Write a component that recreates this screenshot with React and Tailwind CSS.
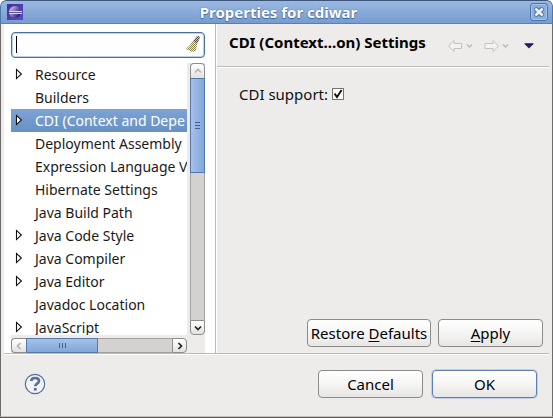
import React from "react";

const treeItems = [
  { name: "Resource", expandable: true },
  { name: "Builders" },
  { name: "CDI (Context and Depe", expandable: true, selected: true },
  { name: "Deployment Assembly" },
  { name: "Expression Language V" },
  { name: "Hibernate Settings" },
  { name: "Java Build Path" },
  { name: "Java Code Style", expandable: true },
  { name: "Java Compiler", expandable: true },
  { name: "Java Editor", expandable: true },
  { name: "Javadoc Location" },
  { name: "JavaScript", expandable: true },
];

function EclipseLogo() {
  return (
    <svg width="16" height="16" viewBox="0 0 16 16" aria-hidden="true">
      <defs>
        <linearGradient id="logoBg" x1="0" y1="0" x2="1" y2="1">
          <stop offset="0" stopColor="#3f31a0" />
          <stop offset="1" stopColor="#5f4bc4" />
        </linearGradient>
        <linearGradient id="logoBall" x1="0" y1="0" x2="1" y2="0.6">
          <stop offset="0" stopColor="#f1c5dd" />
          <stop offset="0.45" stopColor="#8d82c0" />
          <stop offset="1" stopColor="#26206e" />
        </linearGradient>
      </defs>
      <rect width="16" height="16" fill="url(#logoBg)" />
      <circle cx="8" cy="8" r="6" fill="url(#logoBall)" />
      <path d="M2 7.5h13M2 9.5h13" stroke="#d6dcf5" strokeWidth="1" />
      <path d="M2 8.5h13" stroke="#5a55a8" strokeWidth="1" />
    </svg>
  );
}

function CloseIcon() {
  return (
    <svg width="10" height="10" viewBox="0 0 10 10" aria-hidden="true">
      <path d="M1 1l8 8M9 1l-8 8" stroke="#44668f" strokeWidth="4.6" />
      <path d="M1.4 1.4l7.2 7.2M8.6 1.4l-7.2 7.2" stroke="#e9effa" strokeWidth="2.8" />
    </svg>
  );
}

function BroomIcon() {
  return (
    <svg width="16" height="18" viewBox="0 0 16 18" aria-hidden="true">
      <defs>
        <pattern id="bristle" width="2" height="2" patternUnits="userSpaceOnUse">
          <rect width="2" height="2" fill="#eeebd4" />
          <rect width="1" height="1" fill="#8c8444" />
          <rect x="1" y="1" width="1" height="1" fill="#8c8444" />
        </pattern>
        <pattern id="handle" width="2" height="2" patternUnits="userSpaceOnUse">
          <rect width="2" height="2" fill="#c8bfb6" />
          <rect width="1" height="1" fill="#574a48" />
          <rect x="1" y="1" width="1" height="1" fill="#574a48" />
        </pattern>
      </defs>
      <path d="M8 6l4 3-1 7-4 1-6-3 4-4z" fill="url(#bristle)" />
      <path d="M8 6l4-5h2l1 2-3 6z" fill="url(#handle)" />
    </svg>
  );
}

function Expander() {
  return (
    <svg width="8" height="12" viewBox="0 0 8 12" aria-hidden="true">
      <path d="M1.5 1.4v9.2L6.4 6z" fill="#fff" stroke="#111" strokeWidth="1.1" />
    </svg>
  );
}

function Chevron({ d, color }) {
  return (
    <svg width="8" height="8" viewBox="0 0 8 8" fill="none" aria-hidden="true">
      <path d={d} stroke={color} strokeWidth="1.7" />
    </svg>
  );
}

function NavArrow({ d }) {
  return (
    <svg width="26" height="14" viewBox="0 0 26 14" fill="none" aria-hidden="true">
      <path d={d} fill="#f3f2f1" stroke="#c3c2c0" />
      <path d="M19 5.5l2.5 2.5L24 5.5" stroke="#b9b8b6" strokeWidth="1.3" />
    </svg>
  );
}

const bevel = "flex items-center justify-center bg-linear-to-b from-white to-[#e3e2e1] border border-[#8f8d8a]";

const pushButton =
  "h-7 rounded-[4px] border bg-linear-to-b from-white via-[#f5f5f4] to-[#e7e6e5] text-[15px] leading-5 text-black whitespace-nowrap";

function TreeItem({ item }) {
  return (
    <li
      role="treeitem"
      aria-selected={!!item.selected}
      className={
        "flex h-[23px] shrink-0 items-center whitespace-nowrap " +
        (item.selected ? "bg-linear-to-b from-[#7ea3d4] to-[#6790c4] text-white" : "text-[#1a1a1a]")
      }
    >
      <span className="flex w-6 shrink-0 pb-0.5 pl-1">{item.expandable && <Expander />}</span>
      {item.name}
    </li>
  );
}

function Sidebar() {
  return (
    <aside className="flex w-[212px] shrink-0 flex-col border-r border-[#bcbab8] bg-white pt-2 pl-[7px]">
      <div className="relative mr-2.5 h-[26px]">
        <input
          type="text"
          aria-label="Filter"
          className="h-full w-full rounded-[4px] border border-[#4a6f9f] bg-white pr-6 pl-2 text-[15px] shadow-[inset_0_0_0_1px_#bfd2ec] outline-none"
        />
        <span className="absolute top-1 left-[5px] h-[17px] w-px bg-black" />
        <button type="button" aria-label="Clear" className="absolute top-[3px] right-1">
          <BroomIcon />
        </button>
      </div>
      <div className="mt-[5px] mr-2.5 flex min-h-0 flex-1">
        <div className="flex min-w-0 flex-1 flex-col">
          <ul role="tree" className="flex min-h-0 flex-1 flex-col overflow-hidden text-[14px] leading-[23px]">
            {treeItems.map((item) => (
              <TreeItem key={item.name} item={item} />
            ))}
          </ul>
          <div className="flex h-[18px] shrink-0 bg-[#edeceb] pt-[3px]">
            <button type="button" aria-label="Scroll left" className={bevel + " w-[15px] rounded-l-[4px] border-r-0"}>
              <Chevron d="M5.5 1L2.5 4l3 3" color="#b5b3b1" />
            </button>
            <div className="flex min-w-0 flex-1 border-y border-[#a3a19f] bg-[#d4d2d0]">
              <div className="-my-px flex w-[72px] items-center justify-center gap-[2px] border border-[#5377a8] bg-linear-to-b from-[#a5c2e9] to-[#82a7da]">
                <i className="h-[5px] w-px bg-[#3f618f]" />
                <i className="h-[5px] w-px bg-[#3f618f]" />
                <i className="h-[5px] w-px bg-[#3f618f]" />
              </div>
            </div>
            <button type="button" aria-label="Scroll right" className={bevel + " w-[15px] rounded-r-[4px]"}>
              <Chevron d="M2.5 1l3 3-3 3" color="#222" />
            </button>
          </div>
        </div>
        <div className="flex w-[18px] shrink-0 flex-col bg-[#edeceb] pb-[18px] pl-[3px]">
          <button type="button" aria-label="Scroll up" className={bevel + " h-[15px] rounded-t-[4px] border-b-0"}>
            <Chevron d="M1 5.5l3-3 3 3" color="#b5b3b1" />
          </button>
          <div className="flex min-h-0 flex-1 flex-col border-x border-[#a3a19f] bg-[#d4d2d0]">
            <div className="-mx-px flex h-[95px] flex-col items-center justify-center gap-[2px] border border-[#5377a8] bg-linear-to-r from-[#a5c2e9] to-[#82a7da]">
              <i className="h-px w-[5px] bg-[#3f618f]" />
              <i className="h-px w-[5px] bg-[#3f618f]" />
              <i className="h-px w-[5px] bg-[#3f618f]" />
            </div>
          </div>
          <button type="button" aria-label="Scroll down" className={bevel + " h-[15px] rounded-b-[4px]"}>
            <Chevron d="M1 2.5l3 3 3-3" color="#222" />
          </button>
        </div>
      </div>
    </aside>
  );
}

function SettingsPage() {
  return (
    <main className="flex min-w-0 flex-1 flex-col border-l border-white">
      <header className="flex h-[43px] shrink-0 items-center border-b border-[#bcbab8] px-3 shadow-[0_1px_0_#fff]">
        <h1 className="flex-1 pb-1.5 text-[15px] leading-5 font-bold whitespace-nowrap text-black">CDI (Context...on) Settings</h1>
        <div className="flex items-center pt-0.5 pr-[3px]">
          <button type="button" aria-label="Back" className="mr-2.5">
            <NavArrow d="M0.5 7L6 1.500V4.500h7.500v5H6v3z" />
          </button>
          <button type="button" aria-label="Forward" className="mr-3.5">
            <NavArrow d="M14.500 7L9 1.500V4.500H1v5h8v3z" />
          </button>
          <button type="button" aria-label="Menu">
            <svg width="10" height="6" viewBox="0 0 10 6" aria-hidden="true">
              <path d="M0 0.5h10L5 5.5z" fill="#252070" />
              <path d="M1 1h8" stroke="#15133c" />
            </svg>
          </button>
        </div>
      </header>
      <div className="flex flex-1 items-start pt-[17px] pl-[22px]">
        <label htmlFor="cdi" className="pr-1 text-[15px] leading-5 whitespace-nowrap text-[#111]">
          CDI support:
        </label>
        <span className="relative mt-1 h-3 w-3">
          <input
            id="cdi"
            type="checkbox"
            defaultChecked
            className="peer block h-3 w-3 appearance-none border border-[#77736f] bg-white"
          />
          <svg
            className="pointer-events-none absolute top-0 left-0 hidden peer-checked:block"
            width="12"
            height="12"
            viewBox="0 0 12 12"
            fill="none"
            aria-hidden="true"
          >
            <path d="M2.6 5.6L5 9l4.6-7" stroke="#111" strokeWidth="1.9" />
          </svg>
        </span>
      </div>
      <div className="flex justify-end gap-[7px] pr-[6px] pb-1.5">
        <button type="button" className={pushButton + " w-[124px] border-[#8d8b88]"}>
          Restore <u className="underline-offset-2">D</u>efaults
        </button>
        <button type="button" className={pushButton + " w-[105px] border-[#8d8b88]"}>
          <u className="underline-offset-2">A</u>pply
        </button>
      </div>
    </main>
  );
}

export default function App() {
  return (
    <div className="flex h-screen flex-col overflow-hidden rounded-t-[6px] border-b border-[#5d5a58] bg-[#edeceb] font-['Noto_Sans','Open_Sans',sans-serif]">
      <div className="flex h-6 shrink-0 items-center rounded-t-[6px] border-x border-t border-b border-x-[#4f76a8] border-t-[#3c5578] border-b-[#5a80b3] bg-linear-to-b from-[#9ab8e2] to-[#779ccf] pr-1 pl-[6px]">
        <EclipseLogo />
        <h2 className="flex-1 pl-1 text-center text-[15px] leading-5 font-bold text-white [text-shadow:0_1px_1px_#3e639a,0_0_1px_#3e639a]">
          Properties for cdiwar
        </h2>
        <button
          type="button"
          aria-label="Close"
          className="flex h-[18px] w-[18px] items-center justify-center rounded-[3px] border border-[#4d74a7] bg-[#8cadda] shadow-[inset_0_0_0_1px_#a7c2e8]"
        >
          <CloseIcon />
        </button>
      </div>
      <div className="flex min-h-0 flex-1 flex-col border-x border-b border-x-[#6e6b69] border-b-[#c5c3c1] px-[3px]">
        <div className="flex min-h-0 flex-1 border-b border-[#bcbab8]">
          <Sidebar />
          <SettingsPage />
        </div>
        <footer className="flex h-[62px] shrink-0 items-center gap-[9px] border-t border-white pr-3 pb-1 pl-5">
          <button type="button" aria-label="Help" className="mr-auto">
            <svg width="22" height="22" viewBox="0 0 22 22" fill="none" aria-hidden="true">
              <circle cx="11" cy="11" r="9.7" fill="#f3f3f4" stroke="#566f99" strokeWidth="1.2" />
              <path d="M7.2 8c.1-2 1.7-3 3.9-3s3.9 1 3.9 3c0 2.7-3.7 2.6-3.7 5.3" stroke="#566f99" strokeWidth="2.6" />
              <path d="M9.900 15h2.800v2.600H9.900z" fill="#566f99" />
            </svg>
          </button>
          <button type="button" className={pushButton + " w-[105px] border-[#8d8b88]"}>
            Cancel
          </button>
          <button type="button" className={pushButton + " w-[105px] border-[#5b7fb3] shadow-[0_0_0_1px_#c0d2ea]"}>
            OK
          </button>
        </footer>
      </div>
    </div>
  );
}
